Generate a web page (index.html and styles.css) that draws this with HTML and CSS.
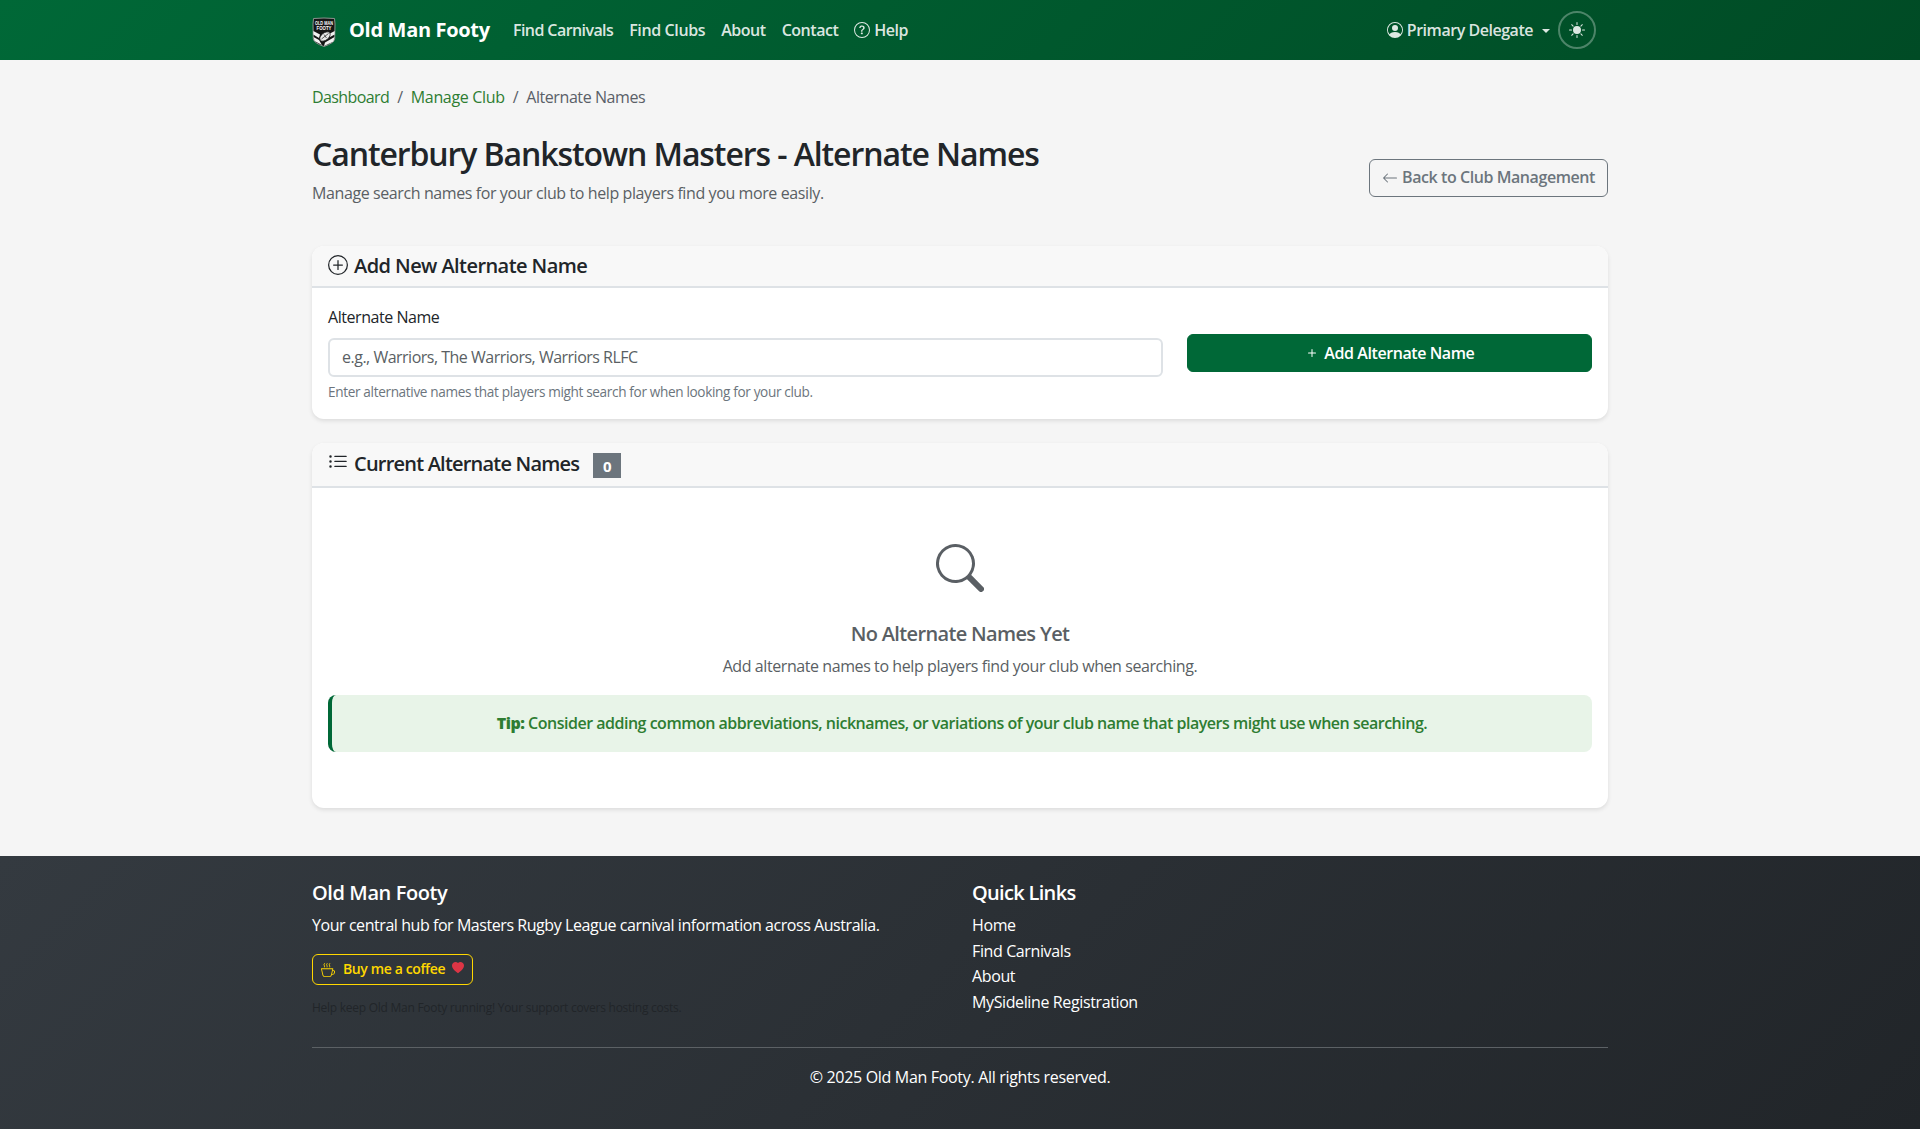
FILE: index.html
```html
<!DOCTYPE html>
<html lang="en">
<head>
<meta charset="utf-8">
<title>Alternate Names - Old Man Footy</title>
<link rel="stylesheet" href="styles.css">
</head>
<body>
<nav class="navbar">
  <div class="container navbar-inner">
    <a class="brand" href="#">
      <svg class="brand-logo" viewBox="0 0 24 30">
        <path d="M1.500 1.500Q12 .5 22.500 1.500L23 7 22.700 22Q22 26 12 29.500 2 26 1.300 22L1 7Z" fill="#151515" stroke="#8b928e" stroke-width="1"/>
        <path d="M1.300 14 8 17.500 7 21 1.300 17.500ZM1.500 20 7 23 10 28 2.500 24ZM22.700 14 17 17 18 20 22.700 17.500ZM22.500 20 13 25.500 12 29 21.500 24.500Z" fill="#f2f2f2"/>
        <ellipse cx="13" cy="19.500" rx="6" ry="3.600" transform="rotate(-38 13 19.500)" fill="#e9e9e9" stroke="#222" stroke-width=".7"/>
        <path d="M9.500 22 16.500 16.500M12 17.500 14.500 21" stroke="#333" stroke-width=".8"/>
        <text class="logo-text" x="12" y="7.800" textLength="18" lengthAdjust="spacingAndGlyphs">OLD MAN</text>
        <text class="logo-text" x="12" y="13" textLength="15" lengthAdjust="spacingAndGlyphs">FOOTY</text>
      </svg>
      <span>Old Man Footy</span>
    </a>
    <div class="nav-links">
      <a class="nav-link nav-carnivals" href="#">Find Carnivals</a>
      <a class="nav-link nav-clubs" href="#">Find Clubs</a>
      <a class="nav-link" href="#">About</a>
      <a class="nav-link" href="#">Contact</a>
      <a class="nav-link" href="#"><svg class="icon" viewBox="0 0 16 16"><path d="M8 15A7 7 0 1 1 8 1a7 7 0 0 1 0 14m0 1A8 8 0 1 0 8 0a8 8 0 0 0 0 16"/><path d="M5.255 5.786a.237.237 0 0 0 .241.247h.825c.138 0 .248-.113.266-.25.09-.656.54-1.134 1.342-1.134.686 0 1.314.343 1.314 1.168 0 .635-.374.927-.965 1.371-.673.489-1.206 1.060-1.168 1.987l.003.217a.25.25 0 0 0 .25.246h.811a.25.25 0 0 0 .25-.25v-.105c0-.718.273-.927 1.010-1.486.609-.463 1.244-.977 1.244-2.056 0-1.511-1.276-2.241-2.673-2.241-1.267 0-2.655.590-2.750 2.286m1.557 5.763c0 .533.425.927 1.010.927.609 0 1.028-.394 1.028-.927 0-.552-.420-.940-1.029-.940-.584 0-1.009.388-1.009.940"/></svg><span>Help</span></a>
    </div>
    <div class="nav-user">
      <a class="nav-link user-link" href="#"><svg class="icon" viewBox="0 0 16 16"><path d="M11 6a3 3 0 1 1-6 0 3 3 0 0 1 6 0"/><path fill-rule="evenodd" d="M0 8a8 8 0 1 1 16 0A8 8 0 0 1 0 8m8-7a7 7 0 0 0-5.468 11.370C3.242 11.226 4.805 10 8 10s4.757 1.225 5.468 2.370A7 7 0 0 0 8 1"/></svg><span>Primary Delegate</span><span class="caret"></span></a>
      <button class="theme-toggle" type="button" aria-label="Toggle theme"><svg class="icon" viewBox="0 0 16 16"><path d="M8 12a4 4 0 1 0 0-8 4 4 0 0 0 0 8M8 0a.5.5 0 0 1 .5.5v2a.5.5 0 0 1-1 0v-2A.5.5 0 0 1 8 0m0 13a.5.5 0 0 1 .5.5v2a.5.5 0 0 1-1 0v-2A.5.5 0 0 1 8 13m8-5a.5.5 0 0 1-.5.5h-2a.5.5 0 0 1 0-1h2a.5.5 0 0 1 .5.5M3 8a.5.5 0 0 1-.5.5h-2a.5.5 0 0 1 0-1h2A.5.5 0 0 1 3 8m10.657-5.657a.5.5 0 0 1 0 .707l-1.414 1.415a.5.5 0 1 1-.707-.708l1.414-1.414a.5.5 0 0 1 .707 0m-9.193 9.193a.5.5 0 0 1 0 .707L3.050 13.657a.5.5 0 0 1-.707-.707l1.414-1.414a.5.5 0 0 1 .707 0m9.193 2.121a.5.5 0 0 1-.707 0l-1.414-1.414a.5.5 0 0 1 .707-.707l1.414 1.414a.5.5 0 0 1 0 .707M4.464 4.465a.5.5 0 0 1-.707 0L2.343 3.050a.5.5 0 1 1 .707-.707l1.414 1.414a.5.5 0 0 1 0 .708"/></svg></button>
    </div>
  </div>
</nav>

<main class="container main">
  <ol class="breadcrumb">
    <li><a href="#">Dashboard</a></li>
    <li><a href="#">Manage Club</a></li>
    <li>Alternate Names</li>
  </ol>

  <header class="page-header">
    <div>
      <h1 class="page-title">Canterbury Bankstown Masters - Alternate Names</h1>
      <p class="page-subtitle">Manage search names for your club to help players find you more easily.</p>
    </div>
    <a class="btn btn-back" href="#"><svg class="icon" viewBox="0 0 16 16"><path fill-rule="evenodd" d="M15 8a.5.5 0 0 0-.5-.5H2.707l3.147-3.146a.5.5 0 1 0-.708-.708l-4 4a.5.5 0 0 0 0 .708l4 4a.5.5 0 0 0 .708-.708L2.707 8.500H14.500A.5.5 0 0 0 15 8"/></svg><span>Back to Club Management</span></a>
  </header>

  <section class="card">
    <div class="card-header">
      <svg class="icon icon-lg" viewBox="0 0 16 16"><path d="M8 15A7 7 0 1 1 8 1a7 7 0 0 1 0 14m0 1A8 8 0 1 0 8 0a8 8 0 0 0 0 16"/><path d="M8 4a.5.5 0 0 1 .5.5v3h3a.5.5 0 0 1 0 1h-3v3a.5.5 0 0 1-1 0v-3h-3a.5.5 0 0 1 0-1h3v-3A.5.5 0 0 1 8 4"/></svg>
      <h2 class="card-title">Add New Alternate Name</h2>
    </div>
    <form class="card-body form-row">
      <div class="field">
        <label class="form-label" for="alt">Alternate Name</label>
        <input class="form-control" id="alt" type="text" placeholder="e.g., Warriors, The Warriors, Warriors RLFC">
        <div class="form-text">Enter alternative names that players might search for when looking for your club.</div>
      </div>
      <button class="btn btn-add" type="button"><svg class="icon" viewBox="0 0 16 16"><path d="M8 4a.5.5 0 0 1 .5.5v3h3a.5.5 0 0 1 0 1h-3v3a.5.5 0 0 1-1 0v-3h-3a.5.5 0 0 1 0-1h3v-3A.5.5 0 0 1 8 4"/></svg><span>Add Alternate Name</span></button>
    </form>
  </section>

  <section class="card">
    <div class="card-header card-header-list">
      <svg class="icon icon-lg icon-list" viewBox="0 0 16 16"><path fill-rule="evenodd" d="M5 11.500a.5.5 0 0 1 .5-.5h9a.5.5 0 0 1 0 1h-9a.5.5 0 0 1-.5-.5m0-4a.5.5 0 0 1 .5-.5h9a.5.5 0 0 1 0 1h-9a.5.5 0 0 1-.5-.5m0-4a.5.5 0 0 1 .5-.5h9a.5.5 0 0 1 0 1h-9a.5.5 0 0 1-.5-.5m-3 1a1 1 0 1 0 0-2 1 1 0 0 0 0 2m0 4a1 1 0 1 0 0-2 1 1 0 0 0 0 2m0 4a1 1 0 1 0 0-2 1 1 0 0 0 0 2"/></svg>
      <h2 class="card-title title-current">Current Alternate Names</h2>
      <span class="badge">0</span>
    </div>
    <div class="card-body empty">
      <svg class="empty-icon" viewBox="0 0 16 16"><path d="M11.742 10.344a6.500 6.500 0 1 0-1.397 1.398h-.001q.044.060.098.115l3.850 3.850a1 1 0 0 0 1.415-1.414l-3.850-3.850a1 1 0 0 0-.115-.100zM12 6.500a5.500 5.500 0 1 1-11 0 5.500 5.500 0 0 1 11 0"/></svg>
      <h3 class="empty-title">No Alternate Names Yet</h3>
      <p class="empty-text">Add alternate names to help players find your club when searching.</p>
      <div class="tip"><strong>Tip:</strong> Consider adding common abbreviations, nicknames, or variations of your club name that players might use when searching.</div>
    </div>
  </section>
</main>

<footer class="footer">
  <div class="container">
    <div class="footer-cols">
      <div>
        <h4 class="footer-title">Old Man Footy</h4>
        <p class="footer-text">Your central hub for Masters Rugby League carnival information across Australia.</p>
        <a class="coffee" href="#">
          <svg class="coffee-cup" viewBox="0 0 16 16"><path fill-rule="evenodd" d="M.5 6a.5.5 0 0 0-.488.608l1.652 7.434A2.500 2.500 0 0 0 4.104 16h5.792a2.500 2.500 0 0 0 2.440-1.958l.131-.590a3 3 0 0 0 1.300-5.854l.221-.990A.5.5 0 0 0 13.500 6zM13 12.500a2 2 0 0 1-.316-.025l.867-3.898A2.001 2.001 0 0 1 13 12.500M2.640 13.825 1.123 7h11.754l-1.517 6.825A1.500 1.500 0 0 1 9.896 15H4.104a1.500 1.500 0 0 1-1.464-1.175"/><path class="steam" d="M4 .5Q2.900 1.500 3.600 2.400T4 4.500M7 .5Q5.900 1.500 6.600 2.400T7 4.500M10 .5Q8.900 1.500 9.600 2.400T10 4.500"/></svg>
          <span>Buy me a coffee</span>
          <svg class="coffee-heart" viewBox="0 0 16 16"><path d="M8 1.314C12.438-3.248 23.534 4.735 8 15-7.534 4.736 3.562-3.248 8 1.314"/></svg>
        </a>
        <p class="footer-help">Help keep Old Man Footy running! Your support covers hosting costs.</p>
      </div>
      <div>
        <h4 class="footer-title footer-title-links">Quick Links</h4>
        <ul class="footer-links">
          <li><a href="#">Home</a></li>
          <li><a href="#">Find Carnivals</a></li>
          <li><a href="#">About</a></li>
          <li><a href="#">MySideline Registration</a></li>
        </ul>
      </div>
    </div>
    <p class="copyright">© 2025 Old Man Footy. All rights reserved.</p>
  </div>
</footer>
</body>
</html>
```

FILE: styles.css
```css
* { box-sizing: border-box; }

body {
  margin: 0;
  min-height: 1129px;
  display: flex;
  flex-direction: column;
  background: #f5f5f5;
  color: #212529;
  font-family: "Open Sans", "Noto Sans", sans-serif;
  font-size: 16px;
  line-height: 1.6;
  letter-spacing: -.4px;
}

h1, h2, h3, h4, p, ol, ul { margin: 0; padding: 0; }
ol, ul { list-style: none; }
a { color: inherit; text-decoration: none; }
button { font: inherit; letter-spacing: inherit; }
svg { display: block; flex: none; fill: currentColor; }

.container { width: 1296px; margin: 0 auto; }
.icon { width: 16px; height: 16px; }
.icon-lg { width: 20px; height: 20px; }

/* Navigation */
.navbar { height: 60px; background: linear-gradient(135deg, #006837 0%, #004b25 100%); color: #fff; }
.navbar-inner { height: 60px; display: flex; align-items: center; }
.brand { display: flex; align-items: center; width: 193px; font-size: 20px; font-weight: 700; letter-spacing: -.32px; }
.brand-logo { width: 24px; height: 30px; margin: 3px 13px 0 0; overflow: visible; }
.logo-text { font: 700 5.5px "Liberation Sans", sans-serif; text-anchor: middle; fill: #fff; letter-spacing: 0; }
.nav-links { display: flex; padding-top: 1px; }
.nav-link { display: flex; align-items: center; padding: 0 8px; font-weight: 600; letter-spacing: -.47px; white-space: nowrap; color: rgba(255, 255, 255, .87); }
.nav-link .icon { margin: -2px 4px 0 0; }
.nav-carnivals { letter-spacing: -.58px; }
.nav-clubs { letter-spacing: -.38px; }
.nav-user { display: flex; align-items: center; margin: 0 12px 0 auto; }
.user-link { padding-top: 1px; letter-spacing: -.47px; }
.caret { margin-left: 9px; border-top: 4px solid; border-right: 4px solid transparent; border-left: 4px solid transparent; }
.theme-toggle { width: 38px; height: 38px; padding: 0; display: grid; place-items: center; border: 2px solid rgba(255, 255, 255, .3); border-radius: 50%; background: none; color: rgba(255, 255, 255, .87); }

/* Page heading */
.main { padding-top: 25px; flex: 1; }
.breadcrumb { display: flex; margin-bottom: 24px; color: #5a6068; letter-spacing: -.42px; }
.breadcrumb a { color: #2e7d32; }
.breadcrumb li:nth-child(1) { letter-spacing: -.6px; }
.breadcrumb li:nth-child(2) { letter-spacing: -.32px; }
.breadcrumb li + li::before { content: "/"; display: inline-block; padding: 0 8px; }
.page-header { display: flex; align-items: center; justify-content: space-between; margin-bottom: 39.4px; }
.page-title { margin-bottom: 8px; font-size: 32px; font-weight: 600; line-height: 1.2; letter-spacing: -1.09px; }
.page-subtitle { color: #5a5f64; }
.btn { display: flex; align-items: center; justify-content: center; height: 38px; padding: 0; border: 1px solid; border-radius: 6px; font-weight: 600; }
.btn span { padding-top: 1px; }
.btn-back { width: 239px; gap: 4px; margin-top: 14px; border-color: #6c757d; color: #6c757d; letter-spacing: -.43px; }

/* Cards */
.card { margin-bottom: 24px; border-radius: 12px; background: #fff; box-shadow: 0 2px 4px rgba(0, 0, 0, .1); overflow: hidden; }
.card-header { display: flex; align-items: center; height: 42px; padding: 1px 16px 0; border-bottom: 2px solid #dee2e6; background: #f8f8f8; }
.card-title { margin-left: 6px; font-size: 20px; font-weight: 600; line-height: 24px; letter-spacing: -.57px; }
.card-header .icon { margin-top: -2px; }
.card-header-list { height: 45px; }
.card-header .icon-list { margin-top: -5px; }
.title-current { margin-bottom: 2px; letter-spacing: -.79px; }
.badge { width: 28px; height: 25px; margin: 1px 0 0 14px; background: #6c757d; color: #fff; font-size: 15px; font-weight: 700; line-height: 26px; text-align: center; letter-spacing: 0; }
.card-body { padding: 16px; }

/* Form */
.form-row { display: grid; grid-template-columns: 834.67px 1fr; column-gap: 24px; align-items: start; }
.form-label { display: block; padding-top: 1px; margin-bottom: 7px; letter-spacing: -.45px; }
.form-control { display: block; width: 100%; height: 39.3px; padding: 0 12px; border: 2px solid #dee2e6; border-radius: 6px; background: #fff; font: inherit; letter-spacing: -.5px; }
.form-control::placeholder { color: #5a5f64; opacity: 1; }
.form-text { margin-top: 4px; color: #6c757d; font-size: 13.6px; letter-spacing: -.35px; }
.btn-add { margin-top: 30px; gap: 4px; border-color: #006837; background: #006837; color: #fff; letter-spacing: -.42px; }

/* Empty state */
.empty { height: 320px; padding-top: 56px; color: #5a5f64; text-align: center; }
.empty-icon { width: 48px; height: 48px; margin: 0 auto 30.5px; }
.empty-title { margin-bottom: 8px; font-size: 20px; font-weight: 600; line-height: 24px; letter-spacing: -.65px; }
.empty-text { margin-bottom: 15px; letter-spacing: -.42px; }
.tip { padding: 16.5px 16px 15px; border-left: 4px solid #006837; border-radius: 8px; background: #e8f4e8; color: #2e7d32; font-weight: 600; letter-spacing: -.49px; }

/* Footer */
.footer { height: 273px; padding-top: 25px; background: linear-gradient(135deg, #343a40 0%, #212529 100%); color: #fff; }
.footer-cols { display: grid; grid-template-columns: 1fr 1fr; column-gap: 24px; height: 167px; border-bottom: 1px solid #5c6165; }
.footer-title { margin-bottom: 8px; font-size: 20px; font-weight: 600; line-height: 24px; letter-spacing: -.4px; }
.footer-title-links { letter-spacing: -.68px; }
.footer-text { margin-bottom: 15px; letter-spacing: -.44px; }
.coffee { display: flex; align-items: center; width: 161px; height: 31px; padding: 1px 8px 0; border: 1px solid #ffd700; border-radius: 6px; color: #ffd700; font-size: 14px; font-weight: 600; letter-spacing: -.38px; }
.coffee-cup { width: 14px; height: 14px; margin-right: 8px; }
.steam { fill: none; stroke: currentColor; stroke-width: 1; stroke-linecap: round; }
.coffee-heart { width: 12px; height: 12px; margin: -4px 0 0 auto; color: #dc3545; }
.footer-help { margin-top: 13px; color: #212529; font-size: 12px; letter-spacing: -.26px; }
.footer-links { letter-spacing: -.38px; }
.copyright { margin-top: 17px; text-align: center; letter-spacing: -.32px; }
```
